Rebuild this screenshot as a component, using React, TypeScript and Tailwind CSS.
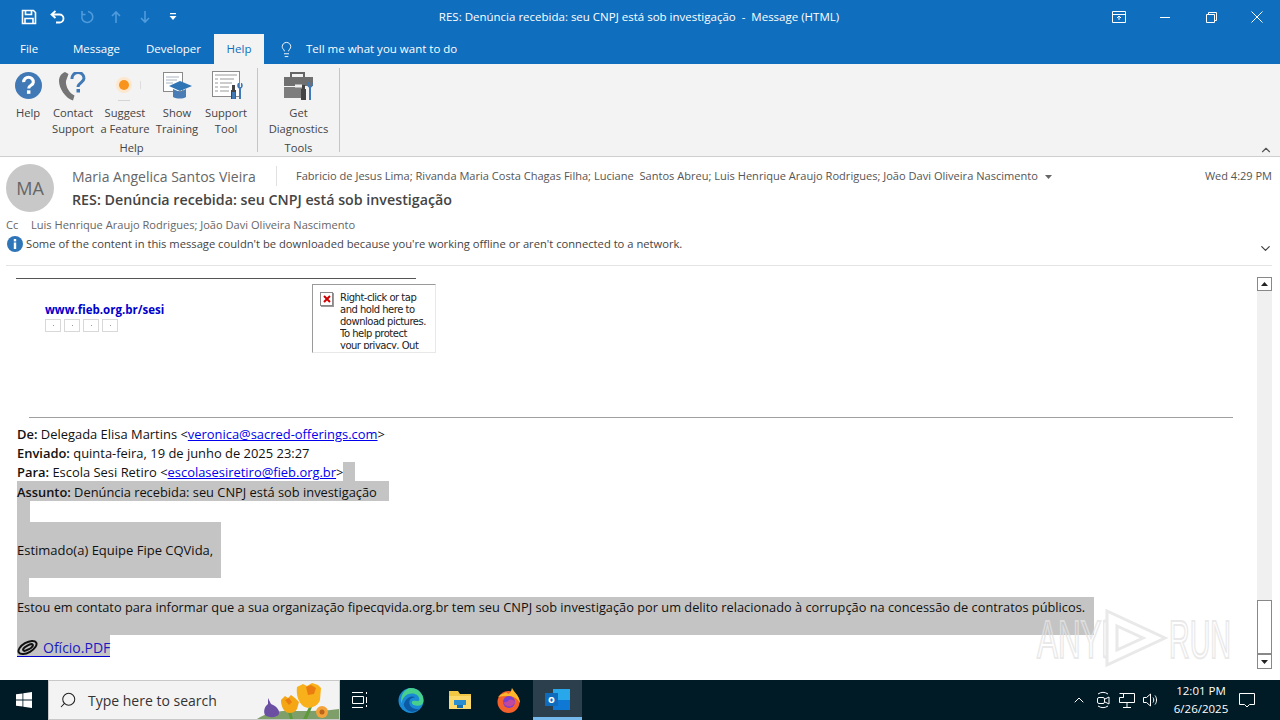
import { ChevronDown, ChevronUp, Lightbulb, Search } from "lucide-react";

const ui = "font-['Open_Sans',sans-serif]";

function RibbonButton({ w, icon, lines }: { w: string; icon: React.ReactNode; lines: string[] }) {
  return (
    <div className={`${w} flex flex-col items-center`}>
      <div className="h-[34px] w-full flex items-center justify-center">{icon}</div>
      <div className="mt-[3px] text-[11.2px] leading-[16px] text-[#444] text-center whitespace-nowrap">
        {lines.map((l) => (
          <div key={l}>{l}</div>
        ))}
      </div>
    </div>
  );
}

function QuickAccess() {
  return (
    <div className="flex items-center gap-[13px] pl-[21px]">
      <svg width="16" height="16" viewBox="0 0 16 16" fill="none" stroke="white" strokeWidth="1.6">
        <path d="M1.500 1.500h11l2 2v11h-13z" />
        <path d="M4.500 1.500v4h6v-4M4 14.500v-5h8v5" />
      </svg>
      <svg width="16" height="14" viewBox="0 0 16 14" fill="none" stroke="white" strokeWidth="1.8">
        <path d="M5.500 1L1.500 4.500l4 3.500M2 4.500h7.500a4 4 0 010 8H6" />
      </svg>
      <svg width="16" height="14" viewBox="0 0 16 14" fill="none" stroke="#4f9bdc" strokeWidth="1.6">
        <path d="M9 1.500a5.500 5.500 0 11-5 2M3 1v3.500h3.500" />
      </svg>
      <svg width="16" height="14" viewBox="0 0 16 14" fill="none" stroke="#4f9bdc" strokeWidth="1.6">
        <path d="M8 13V2M4 6l4-4 4 4" />
      </svg>
      <svg width="16" height="14" viewBox="0 0 16 14" fill="none" stroke="#4f9bdc" strokeWidth="1.6">
        <path d="M8 1v11M4 8l4 4 4-4" />
      </svg>
      <svg width="8" height="8" viewBox="0 0 8 8" fill="white" className="ml-[3px]">
        <path d="M1 0h6v1.200H1zM.5 3h7L4 7z" />
      </svg>
    </div>
  );
}

function WindowControls() {
  return (
    <div className="flex items-center text-white">
      <div className="w-[46px] flex justify-center">
        <svg width="14" height="12" viewBox="0 0 14 12" fill="none" stroke="white">
          <path d="M.5.5h13v11H.5zM.5 3.500h13M7 9V5M5 7l2-2 2 2" />
        </svg>
      </div>
      <div className="w-[46px] flex justify-center">
        <div className="w-[10px] h-px bg-white" />
      </div>
      <div className="w-[46px] flex justify-center">
        <svg width="11" height="11" viewBox="0 0 11 11" fill="none" stroke="white">
          <path d="M.5 2.500h8v8h-8zM2.500 2.500v-2h8v8h-2" />
        </svg>
      </div>
      <div className="w-[46px] flex justify-center">
        <svg width="12" height="12" viewBox="0 0 12 12" fill="none" stroke="white">
          <path d="M.5.5l11 11M11.500.5l-11 11" />
        </svg>
      </div>
    </div>
  );
}

function HelpIcon() {
  return (
    <svg width="27" height="27" viewBox="0 0 28 28">
      <circle cx="14" cy="14" r="14" fill="#4079b5" />
      <path d="M9 10.500a5 5 0 1110 0c0 3.500-4.800 3-4.800 6.500" fill="none" stroke="white" strokeWidth="3.200" />
      <rect x="12.400" y="19" width="3.600" height="3.600" fill="white" />
    </svg>
  );
}

function ContactIcon() {
  return (
    <svg width="29" height="29" viewBox="0 0 29 29" className="mt-[2px]">
      <path d="M6 0l3.500 2-2.500 7c-.5 4 2 10 6 13l2.500 1.500-1.500 5C6 26 0 16 0 9 0 4 3 1 6 0z" fill="#757575" />
      <path d="M13 7a6 6 0 0112-1c.5 4-6 5-6 9" fill="none" stroke="#4079b5" strokeWidth="3" />
      <rect x="17.500" y="17" width="3.500" height="3.500" fill="#4079b5" />
    </svg>
  );
}

function SuggestIcon() {
  return (
    <svg width="34" height="32" viewBox="0 0 34 32">
      <circle cx="16" cy="16" r="8" fill="#fde8cf" />
      <circle cx="16" cy="16" r="5" fill="#f8941d" />
      <rect x="32" y="12" width="1" height="8" fill="#dddddd" />
      <rect x="10" y="31" width="12" height="1" fill="#d5d5d5" />
    </svg>
  );
}

function TrainingIcon() {
  return (
    <svg width="29" height="27" viewBox="0 0 29 27">
      <rect x=".5" y=".5" width="19" height="19" fill="#fff" stroke="#8a8a8a" />
      <path d="M3 5h13M3 8h11M3 11h7" stroke="#a8b4c0" />
      <path d="M6 14l11-5 12 5-12 5z" fill="#2f74b5" />
      <path d="M10 17v8c4 2 10 2 13 0v-8l-6 3z" fill="#4a7db5" />
    </svg>
  );
}

function SupportToolIcon() {
  return (
    <svg width="34" height="28" viewBox="0 0 34 28" className="ml-[6px]">
      <rect x=".5" y=".5" width="27" height="25" fill="#fff" stroke="#8a8a8a" />
      <path d="M3 4h22M3 8h3M8 8h14M3 12h3M8 12h12M3 16h3M8 16h9M3 20h3M8 20h9" stroke="#999" />
      <path d="M20 14h3v5h1v9h-5v-9h1z" fill="#444" />
      <rect x="20" y="21" width="3.500" height="7" fill="#4079b5" />
      <path d="M26 12h1v4h2v-4h1c1.500 2.500.5 5-1 5.500V28h-2V17.500c-1.500-.5-2.500-3-1-5.500z" fill="#4079b5" />
    </svg>
  );
}

function DiagnosticsIcon() {
  return (
    <svg width="30" height="28" viewBox="0 0 30 28" className="mt-[1px]">
      <path d="M7 5V1h13v4" fill="none" stroke="#666" strokeWidth="2" />
      <path d="M0 5h29v9H0z" fill="#6f6f6f" />
      <path d="M0 15h18v11H0z" fill="#7d7d7d" />
      <rect x="11" y="12.500" width="7" height="3" fill="#eeeeee" />
      <path d="M18 13h3v4h1v11h-5V17h1z" fill="#444" />
      <path d="M24 10h1v4h2v-4h1c1.500 2.500.5 5-1 5.500V28h-2V15.500c-1.500-.5-2.500-3-1-5.500z" fill="#4079b5" />
    </svg>
  );
}

function Ribbon() {
  return (
    <div className="h-[93px] bg-[#f3f3f3] border-b border-[#cfcfcf] flex items-start pt-[4px] pl-[6px] relative shrink-0">
      <div className="w-[252px] h-[84px] border-r border-[#c6c6c6] flex flex-col">
        <div className="flex">
          <RibbonButton w="w-[44px]" icon={<HelpIcon />} lines={["Help"]} />
          <RibbonButton w="w-[46px]" icon={<ContactIcon />} lines={["Contact", "Support"]} />
          <RibbonButton w="w-[58px]" icon={<SuggestIcon />} lines={["Suggest", "a Feature"]} />
          <RibbonButton w="w-[46px]" icon={<TrainingIcon />} lines={["Show", "Training"]} />
          <RibbonButton w="w-[52px]" icon={<SupportToolIcon />} lines={["Support", "Tool"]} />
        </div>
        <div className="text-[11.2px] leading-[14px] text-[#444] text-center mt-[4px]">Help</div>
      </div>
      <div className="w-[82px] h-[84px] border-r border-[#c6c6c6] flex flex-col">
        <RibbonButton w="w-full" icon={<DiagnosticsIcon />} lines={["Get", "Diagnostics"]} />
        <div className="text-[11.2px] leading-[14px] text-[#444] text-center mt-[4px]">Tools</div>
      </div>
      <ChevronUp className="absolute right-[7px] bottom-[-1px] text-[#555]" size={14} />
    </div>
  );
}

function MessageHeader() {
  return (
    <div className="h-[109px] shrink-0 bg-white pl-[6px] pr-[8px] relative">
      <div className="flex pt-[7px]">
        <div className="w-[48px] h-[48px] rounded-full bg-[#c8c8c8] flex items-center justify-center text-[18px] text-[#666]">
          MA
        </div>
        <div className="ml-[18px] flex-1">
          <div className="flex items-center h-[24px]">
            <span className="text-[14px] text-[#666] w-[204px] whitespace-nowrap">Maria Angelica Santos Vieira</span>
            <div className="w-px h-[20px] bg-[#e1e1e1]" />
            <span className="ml-[19px] text-[11.07px] text-[#555] whitespace-nowrap">
              Fabricio de Jesus Lima; Rivanda Maria Costa Chagas Filha; Luciane&nbsp; Santos Abreu; Luis Henrique Araujo Rodrigues; João Davi Oliveira Nascimento
            </span>
            <svg width="7" height="4" viewBox="0 0 7 4" className="ml-[7px] mt-[2px]" fill="#666">
              <path d="M0 0h7L3.500 4z" />
            </svg>
            <span className="ml-auto text-[11px] text-[#555] whitespace-nowrap">Wed 4:29 PM</span>
          </div>
          <div className="text-[14.25px] leading-[20px] font-semibold text-[#444] mt-[2px]">
            RES: Denúncia recebida: seu CNPJ está sob investigação
          </div>
        </div>
      </div>
      <div className="flex text-[11.08px] leading-[14px] text-[#666] mt-[6px]">
        <span className="w-[25px]">Cc</span>
        <span>Luis Henrique Araujo Rodrigues; João Davi Oliveira Nascimento</span>
      </div>
      <div className="flex items-center mt-[4px]">
        <svg width="16" height="16" viewBox="0 0 16 16" className="ml-[1px]">
          <circle cx="8" cy="8" r="8" fill="#2f76b8" />
          <rect x="6.800" y="3" width="2.400" height="2.400" fill="white" />
          <rect x="6.800" y="6.500" width="2.400" height="6.500" fill="white" />
        </svg>
        <span className="ml-[3px] text-[11.2px] leading-[14px] text-[#444] whitespace-nowrap">
          Some of the content in this message couldn't be downloaded because you're working offline or aren't connected to a network.
        </span>
      </div>
      <ChevronDown className="absolute right-[7px] top-[84px] text-[#444]" size={15} />
      <div className="absolute left-[6px] right-[8px] bottom-0 h-px bg-[#e3e3e3]" />
    </div>
  );
}

function BrokenThumb() {
  return (
    <div className="w-[16px] h-[13px] border border-[#d8d8d8] flex items-center justify-center">
      <div className="w-px h-px bg-[#999]" />
    </div>
  );
}

function Signature() {
  return (
    <div className="flex h-[138px]">
      <div className="pl-[28px] w-[295px] pt-[23px]">
        <div className="text-[11.500px] leading-[16px] font-bold text-[#0000cc]">www.fieb.org.br/sesi</div>
        <div className="flex gap-[3px] mt-[1px]">
          <BrokenThumb />
          <BrokenThumb />
          <BrokenThumb />
          <BrokenThumb />
        </div>
      </div>
      <div className="w-[124px] h-[69px] mt-[5px] border-l border-t border-[#9a9a9a] border-r border-b border-r-[#e8e8e8] border-b-[#e8e8e8] flex pl-[7px] pt-[7px]">
        <div className="w-[13px] h-[14px] border border-[#888] flex items-center justify-center shrink-0 shadow-[1px_1px_0_#999]">
          <svg width="8" height="8" viewBox="0 0 8 8" stroke="#d00000" strokeWidth="2">
            <path d="M1 1l6 6M7 1l-6 6" />
          </svg>
        </div>
        <div className="ml-[7px] h-[57px] overflow-hidden text-[10px] leading-[12px] text-[#222] whitespace-nowrap font-['DejaVu_Sans',sans-serif] tracking-[-0.5px]">
          <div>Right-click or tap</div>
          <div>and hold here to</div>
          <div>download pictures.</div>
          <div>To help protect</div>
          <div>your privacy, Out</div>
        </div>
      </div>
    </div>
  );
}

function Mail() {
  const link = "text-[#0000ee] underline";
  return (
    <div className="flex-1 pl-[17px] pr-[24px] pt-[12px] overflow-hidden text-[#111] font-['Open_Sans',sans-serif]">
      <div className="w-[400px] h-px bg-[#555] -ml-px" />
      <Signature />
      <div className="h-px bg-[#a0a0a0] ml-[12px]" />
      <div className="mt-[6px] leading-[19px] whitespace-nowrap">
        <div className="h-[19px] pt-px text-[12.93px]">
          <b className="font-semibold">De:</b> Delegada Elisa Martins &lt;<span className={link}>veronica@sacred-offerings.com</span>&gt;
        </div>
        <div className="h-[19px] pt-px text-[12.93px]">
          <b className="font-semibold">Enviado:</b> quinta-feira, 19 de junho de 2025 23:27
        </div>
        <div className="h-[19px] flex text-[12.93px]">
          <span className="pt-px">
            <b className="font-semibold">Para:</b> Escola Sesi Retiro &lt;<span className={link}>escolasesiretiro@fieb.org.br</span>&gt;
          </span>
          <span className="w-[12px] bg-[#c4c4c4]" />
        </div>
        <div className="w-[372px] h-[20px] pt-[2px] bg-[#c4c4c4] text-[12.85px]">
          <b className="font-semibold">Assunto:</b> Denúncia recebida: seu CNPJ está sob investigação
        </div>
        <div className="w-[13px] h-[21px] bg-[#c4c4c4]" />
        <div className="w-[204px] h-[56px] bg-[#c4c4c4] flex items-center text-[13px]">Estimado(a) Equipe Fipe CQVida,</div>
        <div className="w-[12px] h-[19px] bg-[#c4c4c4]" />
        <div className="w-[1077px] h-[38px] pt-px bg-[#c4c4c4] text-[12.8px]">
          Estou em contato para informar que a sua organização fipecqvida.org.br tem seu CNPJ sob investigação por um delito relacionado à corrupção na concessão de contratos públicos.
        </div>
        <div className="w-[93px] h-[22px] pt-[3px] bg-[#c4c4c4] flex items-center border-b border-[#0000cc] text-[14px] text-[#1a1ac0]">
          <svg width="21" height="17" viewBox="0 0 21 17" fill="none" stroke="#111" strokeWidth="2" className="shrink-0">
            <ellipse cx="10.500" cy="8.500" rx="10" ry="5" transform="rotate(-30 10.500 8.500)" />
            <ellipse cx="11" cy="8.500" rx="5.500" ry="2" transform="rotate(-30 11 8.500)" />
          </svg>
          <span className="ml-[5px]">Ofício.PDF</span>
        </div>
      </div>
    </div>
  );
}

function Scrollbar() {
  return (
    <div className="w-[15px] mr-[8px] mt-[11px] mb-[11px] flex flex-col bg-[#f0f0f0] shrink-0">
      <div className="h-[14px] border border-[#888] bg-white flex items-center justify-center">
        <svg width="7" height="4" viewBox="0 0 7 4" fill="#222"><path d="M0 4h7L3.500 0z" /></svg>
      </div>
      <div className="flex-1" />
      <div className="h-[54px] border border-[#888] bg-white" />
      <div className="h-[15px] border border-[#888] bg-white flex items-center justify-center">
        <svg width="7" height="4" viewBox="0 0 7 4" fill="#222"><path d="M0 0h7L3.500 4z" /></svg>
      </div>
    </div>
  );
}

function Watermark() {
  return (
    <div className="absolute left-[1037px] top-[608px] h-[62px] flex items-center opacity-80 pointer-events-none">
      <span className="w-[66px] text-[54px] leading-[60px] font-['Liberation_Sans',sans-serif] text-transparent [-webkit-text-stroke:2px_#e4e4e4] scale-x-[0.58] origin-left">
        ANY
      </span>
      <svg width="66" height="62" viewBox="0 0 66 62" fill="none" stroke="#e4e4e4" strokeWidth="3">
        <path d="M4 3v54l58-27zM14 18v24l26-12zM4 12L0 14v34l4 2" />
      </svg>
      <span className="text-[54px] leading-[60px] font-['Liberation_Sans',sans-serif] text-transparent [-webkit-text-stroke:2px_#e4e4e4] scale-x-[0.53] origin-left w-[64px]">
        RUN
      </span>
    </div>
  );
}

function Flowers() {
  return (
    <svg width="82" height="38" viewBox="0 0 82 38" className="absolute right-0 top-0">
      <path d="M0 38C10 31 25 29 40 30c14 0 28 0 42-2v10z" fill="#7f9f6a" />
      <path d="M31 31l2 7h3l-2-8zM52 26l-6 12h4l5-12z" fill="#5e9a3a" />
      <path d="M11 17l3 6c6 2 9 7 8 10-2 4-11 4-14 1-2-4 0-9 3-11z" fill="#6a4fa3" />
      <path d="M24 19l4-4 3 2 3-3 4 3 4 4-2 7c-2 4-8 5-11 3-3-2-5-7-5-12z" fill="#f4a615" />
      <path d="M28 19l4-2 3 4-3 3z" fill="#e97d12" />
      <path d="M40 6l6-3 4 2 5-3 6 2 3 3-1 12c-2 7-12 10-17 6-5-4-7-12-6-19z" fill="#f8b11b" />
      <path d="M49 6l5-2 5 3-2 6-6 1z" fill="#ea7c10" />
      <circle cx="65" cy="31" r="6" fill="#f3a33a" />
      <circle cx="65" cy="31" r="2.500" fill="#b9651a" />
    </svg>
  );
}

function Taskbar() {
  return (
    <div className="h-[40px] shrink-0 bg-[#001a26] flex items-stretch font-['Open_Sans',sans-serif]">
      <div className="w-[48px] flex items-center justify-center">
        <svg width="16" height="16" viewBox="0 0 16 16" fill="white">
          <path d="M0 2.300l6.500-.9v6.200H0zM7.300 1.300L16 0v7.600H7.300zM0 8.400h6.500v6.200L0 13.700zM7.300 8.400H16V16l-8.700-1.300z" />
        </svg>
      </div>
      <div className="w-[292px] bg-[#f3f3f3] border border-[#c8c8c8] flex items-center pl-[10px] relative overflow-hidden">
        <Search size={18} className="text-[#222] -scale-x-100" strokeWidth={1.4} />
        <span className="ml-[11px] text-[14px] text-[#333]">Type here to search</span>
        <Flowers />
      </div>
      <div className="w-[40px] flex items-center justify-center">
        <svg width="16" height="16" viewBox="0 0 16 16" fill="none" stroke="white">
          <path d="M0 .5h11M0 15.500h11M.5 4.500h11v7H.5zM14.500 0v2M14.500 5v6M14.500 13v2" />
        </svg>
      </div>
      <div className="w-[49px] flex items-center justify-center ml-[6px]">
        <svg width="26" height="25" viewBox="0 0 24 24">
          <circle cx="12" cy="12" r="12" fill="#1a8ad4" />
          <path d="M12 0a12 12 0 0112 12c0 4-3 5-6 5-4 0-6-2-5-4s7 1 7-2C20 6 14 4 9 6 5 8 3 12 3 15 1 8 6 0 12 0z" fill="#47cf8c" />
          <path d="M5 16c2-7 8-9 11-7-6 0-7 5-4 9 2 2 6 3 8 2-5 5-13 3-15-4z" fill="#0c59a4" />
        </svg>
      </div>
      <div className="w-[49px] flex items-center justify-center">
        <svg width="22" height="18" viewBox="0 0 22 18">
          <path d="M0 0h9l2 3h11v15H0z" fill="#f2c744" />
          <rect x="0" y="5" width="22" height="13" fill="#fbd96a" />
          <rect x="5" y="9" width="12" height="5" fill="#2a8fd0" />
          <rect x="8" y="14" width="6" height="3" fill="#1a6fb0" />
        </svg>
      </div>
      <div className="w-[49px] flex items-center justify-center">
        <svg width="23" height="25" viewBox="0 0 23 25">
          <circle cx="11.500" cy="14" r="11" fill="#f4612c" />
          <path d="M1 9c2-2 3-3 5-3 2-2 4-2 5 0 3-1 3-3 4-6 1 2 3 4 5 7 2 3 3 6 3 8-3-5-7-7-11-7-5 0-8 0-11 1z" fill="#fcb62a" />
          <circle cx="12" cy="14" r="6" fill="#7b3fd0" />
          <path d="M6 14c3 1 5-1 6-2 2-1 5 0 6 2-1 5-9 7-12 0z" fill="#c0489e" />
        </svg>
      </div>
      <div className="w-[49px] bg-[#2c3f4c] border-b-[3px] border-[#76b9ed] flex items-center justify-center">
        <div className="relative w-[25px] h-[21px] mt-[2px]">
          <div className="absolute right-0 top-0 w-[17px] h-[11px] bg-[#28a8ea]" />
          <div className="absolute right-0 bottom-0 w-[17px] h-[10px] bg-[#0f78d4]" />
          <div className="absolute left-0 top-[4px] w-[13px] h-[13px] bg-[#0f6cbd] text-white text-[11px] leading-[12px] text-center font-bold">
            o
          </div>
        </div>
      </div>
      <div className="ml-auto flex items-center text-white">
        <ChevronUp size={16} className="mr-[8px]" strokeWidth={1.5} />
        <svg width="16" height="18" viewBox="0 0 16 18" fill="none" stroke="white" className="mr-[8px]">
          <path d="M3 3a9 9 0 0110 0M3 15a9 9 0 0010 0" />
          <rect x="2.500" y="6.500" width="7" height="6" rx="1.500" />
          <path d="M10 8l4-2v7l-4-2" />
        </svg>
        <svg width="16" height="15" viewBox="0 0 16 15" fill="none" stroke="white" className="mr-[8px]">
          <path d="M4.500.5h11v9h-15v-5h4zM.5.5h4v4M8 10v4M4 14.500h8" />
        </svg>
        <svg width="16" height="14" viewBox="0 0 16 14" fill="none" stroke="white" className="mr-[11px]">
          <path d="M.5 4.500h3l4-3.500v12l-4-3.500h-3zM10 4.500c1 1.500 1 3.500 0 5M12 2.500c2 2.500 2 6.500 0 9" />
        </svg>
        <div className="w-[62px] text-center text-[11.5px] leading-[18px] whitespace-nowrap">
          <div>12:01 PM</div>
          <div>6/26/2025</div>
        </div>
        <svg width="16" height="15" viewBox="0 0 16 15" fill="none" stroke="white" className="ml-[7px] mr-[25px]">
          <path d="M.5.5h15v11h-5l-2.500 2.500-2.500-2.500h-5z" />
        </svg>
      </div>
    </div>
  );
}

export default function App() {
  return (
    <div className={`${ui} w-[1280px] h-[720px] overflow-hidden flex flex-col bg-white relative`}>
      <div className="h-[34px] shrink-0 bg-[#106ebe] flex items-center justify-between text-white">
        <QuickAccess />
        <div className="absolute left-0 w-[1278px] text-center text-[11.5px] pointer-events-none whitespace-pre">
          RES: Denúncia recebida: seu CNPJ está sob investigação  -  Message (HTML)
        </div>
        <WindowControls />
      </div>
      <div className="h-[30px] shrink-0 bg-[#106ebe] flex items-end text-[11.5px] text-white">
        <div className="h-[30px] w-[59px] pl-[20px] flex items-center">File</div>
        <div className="h-[30px] w-[73px] pl-[14px] flex items-center">Message</div>
        <div className="h-[30px] w-[82px] pl-[14px] flex items-center">Developer</div>
        <div className="h-[30px] w-[50px] bg-[#f3f3f3] text-[#106ebe] flex items-center justify-center">Help</div>
        <div className="h-[30px] flex items-center pl-[14px]">
          <Lightbulb size={17} strokeWidth={1.3} />
          <span className="ml-[11px]">Tell me what you want to do</span>
        </div>
      </div>
      <Ribbon />
      <MessageHeader />
      <div className="flex-1 flex min-h-0">
        <Mail />
        <Scrollbar />
      </div>
      <Taskbar />
      <Watermark />
    </div>
  );
}
